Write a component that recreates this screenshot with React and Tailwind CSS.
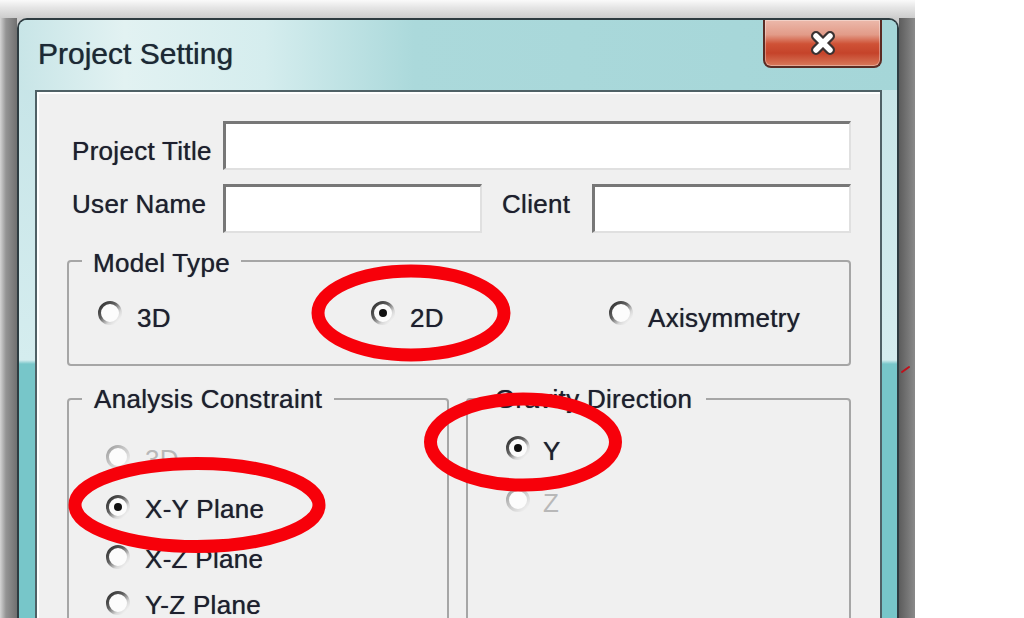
import React from "react";

function Radio({ checked, disabled }) {
  const id = disabled ? "rg-dis" : "rg-en";
  return (
    <svg width="26" height="26" viewBox="0 0 26 26">
      <defs>
        {disabled ? (
          <linearGradient id={id} x1="0" y1="0" x2="1" y2="1">
            <stop offset="0" stopColor="#9c9c9c" />
            <stop offset="0.45" stopColor="#c8c8c8" />
            <stop offset="1" stopColor="#f6f6f6" />
          </linearGradient>
        ) : (
          <linearGradient id={id} x1="0" y1="0" x2="1" y2="1">
            <stop offset="0" stopColor="#2c2c2c" />
            <stop offset="0.4" stopColor="#606060" />
            <stop offset="0.7" stopColor="#d8d8d8" />
            <stop offset="1" stopColor="#ffffff" />
          </linearGradient>
        )}
      </defs>
      <circle cx="13" cy="13" r="10.5" fill="#fcfcfc" stroke={`url(#${id})`} strokeWidth="3" />
      {checked && <circle cx="13" cy="13" r="4" fill="#111111" />}
    </svg>
  );
}

function RadioItem({ label, checked, disabled, className, textClass, gapClass }) {
  return (
    <div className={"flex items-start h-[30px] " + (gapClass || "gap-[14px] ") + " " + (className || "")}>
      <div className="mt-[2px] shrink-0">
        <Radio checked={checked} disabled={disabled} />
      </div>
      <span className={"whitespace-nowrap " + textClass + (disabled ? " text-[#b8b8b8] [text-shadow:none]" : "")}>{label}</span>
    </div>
  );
}

function Input({ className }) {
  return (
    <div
      className={
        "bg-white border-t-[3px] border-l-[3px] border-r-2 border-b-2 border-t-[#777777] border-l-[#777777] border-r-[#e0e0e0] border-b-[#e0e0e0] " +
        (className || "")
      }
    />
  );
}

function Client() {
  return (
    <div className="flex-1 border-2 border-[#4f6166] bg-[#f0f0f0] shadow-[inset_2px_2px_0_#ffffff] pt-[29px] pl-[30px] pr-[29px] flex flex-col text-[26px] leading-[30px] tracking-[0.3px] text-[#1d1f2e] [text-shadow:0_0_0.7px_rgba(29,31,46,0.8)]">
      <div className="flex h-[49px]">
        <div className="w-[156px] pl-[5px] mt-[15px] whitespace-nowrap">Project Title</div>
        <Input className="flex-1" />
      </div>
      <div className="flex h-[49px] mt-[14px]">
        <div className="w-[156px] pl-[5px] mt-[5px] whitespace-nowrap">User Name</div>
        <Input className="w-[259px]" />
        <div className="ml-[20px] w-[90px] mt-[5px] whitespace-nowrap">Client</div>
        <Input className="flex-1" />
      </div>

      <div className="mt-[27px] h-[106px] shrink-0 border-2 border-[#a6a6a6] rounded-[4px]">
        <div className="-mt-[14px] ml-[13px] w-fit px-[11px] bg-[#f0f0f0] whitespace-nowrap">Model Type</div>
        <div className="flex mt-[20px] pl-[28px]">
          <RadioItem className="w-[273px]" label="3D" textClass="mt-[5px]" />
          <RadioItem className="w-[238px]" label="2D" checked textClass="mt-[5px]" />
          <RadioItem label="Axisymmetry" textClass="mt-[5px]" />
        </div>
      </div>

      <div className="flex gap-[17px] mt-[32px] shrink-0">
        <div className="w-[382px] h-[300px] border-2 border-[#a6a6a6] rounded-[4px]">
          <div className="-mt-[16px] ml-[13px] w-fit px-[12px] bg-[#f0f0f0] whitespace-nowrap">Analysis Constraint</div>
          <div className="flex flex-col pl-[36px]">
            <RadioItem className="mt-[28px]" label="3D" disabled textClass="mt-[2px]" />
            <RadioItem className="mt-[20px]" label="X-Y Plane" checked textClass="mt-[2px]" />
            <RadioItem className="mt-[20px]" label="X-Z Plane" textClass="mt-[2px]" />
            <RadioItem className="mt-[16px]" label="Y-Z Plane" textClass="mt-[2px]" />
          </div>
        </div>
        <div className="flex-1 h-[300px] border-2 border-[#a6a6a6] rounded-[4px]">
          <div className="-mt-[16px] ml-[13px] w-fit px-[14px] bg-[#f0f0f0] whitespace-nowrap">Gravity Direction</div>
          <div className="flex flex-col pl-[37px]">
            <RadioItem className="mt-[19px]" gapClass="gap-[12px] " label="Y" checked textClass="mt-[3px]" />
            <RadioItem className="mt-[22px]" gapClass="gap-[12px] " label="Z" disabled textClass="mt-[3px]" />
          </div>
        </div>
      </div>
    </div>
  );
}

function CloseButton() {
  return (
    <div className="mr-[15px] w-[119px] h-[48px] rounded-b-[8px] border-2 border-t-0 border-[#5a2c24] bg-[linear-gradient(to_bottom,#ecb9ab_0%,#e29b88_32%,#cf5236_52%,#c5432a_72%,#d8795b_100%)] shadow-[inset_0_0_0_1px_rgba(255,255,255,0.35)] flex items-center justify-center">
      <svg width="30" height="26" viewBox="0 0 30 26">
        <path d="M8 6 L22 20 M22 6 L8 20" stroke="#3b3232" strokeWidth="10" strokeLinecap="round" />
        <path d="M8 6 L22 20 M22 6 L8 20" stroke="#ffffff" strokeWidth="5.5" strokeLinecap="round" />
      </svg>
    </div>
  );
}

function Window() {
  return (
    <div className="flex-1 flex flex-col rounded-t-[10px] border-2 border-b-0 border-[#2e3c41] bg-[linear-gradient(to_bottom,#c4e3e6_0px,#d5edef_340px,#77c6c9_344px,#77c6c9_100%)] overflow-hidden">
      <div className="h-[70px] shrink-0 flex items-start justify-between bg-[linear-gradient(to_right,#c8e5e7_0%,#e2f2f2_12%,#d5edee_28%,#abd9db_45%,#a5d6d8_100%)]">
        <div className="pl-[19px] pt-[19px] text-[30px] leading-[30px] text-[#1c2935] whitespace-nowrap [text-shadow:0_0_0.7px_rgba(28,41,53,0.8)]">Project Setting</div>
        <CloseButton />
      </div>
      <div className="flex-1 flex pl-[16px] pr-[15px]">
        <Client />
      </div>
    </div>
  );
}

export default function App() {
  return (
    <div className="relative w-[1024px] h-[618px] overflow-hidden bg-white flex font-['Liberation_Sans',Arial,sans-serif]">
      <div className="w-[915px] h-full flex flex-col">
        <div className="h-[18px] shrink-0 bg-[linear-gradient(to_bottom,#fafafa_0%,#e6e6e6_40%,#cdcdcd_100%)]" />
        <div className="flex-1 flex bg-[#cdcdcd]">
          <div className="w-[17px] bg-[linear-gradient(to_right,#d4d4d4_0%,#949494_35%,#707070_100%)]" />
          <Window />
          <div className="w-[16px] bg-[linear-gradient(to_right,#5c5c5c_0%,#8a8a8a_100%)]" />
        </div>
      </div>
      <div className="flex-1" />
      <svg className="absolute inset-0 pointer-events-none" width="1024" height="618" viewBox="0 0 1024 618">
        <ellipse cx="411" cy="313" rx="93" ry="42" fill="none" stroke="#f7000a" strokeWidth="13" />
        <ellipse cx="197" cy="505" rx="122" ry="41.5" fill="none" stroke="#f7000a" strokeWidth="13" />
        <ellipse cx="523" cy="442" rx="92.5" ry="43" fill="none" stroke="#f7000a" strokeWidth="13" />
        <path d="M902 372 L909 367" stroke="#c0101a" strokeWidth="2" strokeLinecap="round" />
      </svg>
    </div>
  );
}
